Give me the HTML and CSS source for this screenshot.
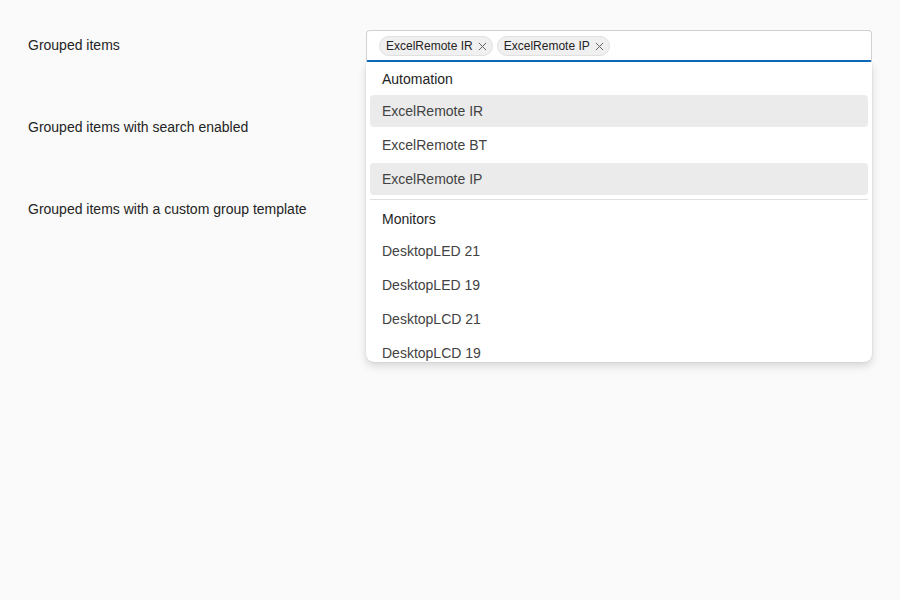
FILE: index.html
```html
<!DOCTYPE html>
<html>
<head>
<meta charset="utf-8">
<link rel="stylesheet" href="styles.css">
</head>
<body>
<div class="page">
  <div class="field">
    <label class="label">Grouped items</label>
    <div class="combo-wrap open">
      <div class="combo focused">
        <span class="chip">ExcelRemote IR<svg class="x" viewBox="0 0 10 10"><path d="M1 1L9 9M9 1L1 9"/></svg></span>
        <span class="chip">ExcelRemote IP<svg class="x" viewBox="0 0 10 10"><path d="M1 1L9 9M9 1L1 9"/></svg></span>
      </div>
      <div class="listbox">
        <div class="group-label">Automation</div>
        <div class="option selected">ExcelRemote IR</div>
        <div class="option">ExcelRemote BT</div>
        <div class="option selected">ExcelRemote IP</div>
        <div class="divider"></div>
        <div class="group-label">Monitors</div>
        <div class="option">DesktopLED 21</div>
        <div class="option">DesktopLED 19</div>
        <div class="option">DesktopLCD 21</div>
        <div class="option">DesktopLCD 19</div>
      </div>
    </div>
  </div>
  <div class="field">
    <label class="label">Grouped items with search enabled</label>
    <div class="combo-wrap"><div class="combo"></div></div>
  </div>
  <div class="field">
    <label class="label">Grouped items with a custom group template</label>
    <div class="combo-wrap"><div class="combo"></div></div>
  </div>
</div>
</body>
</html>
```
FILE: styles.css
```css
html, body {
  margin: 0;
  padding: 0;
  height: 100%;
  background: #fafafa;
  font-family: "Liberation Sans", Arial, sans-serif;
  color: #242424;
}
.page {
  box-sizing: border-box;
  min-height: 100%;
  padding: 30px 28px 0 28px;
  display: flex;
  flex-direction: column;
  gap: 50px;
}
.field {
  display: grid;
  grid-template-columns: 338px 506px;
  align-items: center;
  height: 32px;
}
.label {
  font-size: 14px;
  line-height: 20px;
  color: #242424;
  margin-top: -2px;
}
.combo-wrap {
  position: relative;
  height: 32px;
}
.combo-wrap.open {
  z-index: 10;
}
.combo {
  box-sizing: border-box;
  height: 32px;
  background: transparent;
  border: 1px solid transparent;
  border-radius: 4px;
  display: flex;
  align-items: center;
  gap: 4px;
  padding: 0 12px;
}
.combo.focused {
  background: #ffffff;
  border: 1px solid #d1d1d1;
  border-bottom: 2px solid #0f6cbd;
  border-radius: 4px 4px 2px 2px;
  padding-top: 1px;
}
.chip {
  display: inline-flex;
  align-items: center;
  box-sizing: border-box;
  height: 20px;
  padding: 0 5px 0 6px;
  gap: 5px;
  border: 1px solid #e0e0e0;
  background: #f0f0f0;
  border-radius: 10px;
  font-size: 12px;
  color: #242424;
}
.x {
  width: 9px;
  height: 9px;
  stroke: #616161;
  stroke-width: 1.1;
  fill: none;
}
.listbox {
  position: absolute;
  top: 32px;
  left: 0;
  right: 0;
  height: 300px;
  overflow: hidden;
  background: #ffffff;
  border-radius: 0 0 8px 8px;
  box-shadow: 0 0 2px rgba(0,0,0,0.12), 0 4px 8px rgba(0,0,0,0.14);
  padding: 1px 4px 0 4px;
  box-sizing: border-box;
}
.group-label {
  height: 32px;
  line-height: 32px;
  padding-left: 12px;
  font-size: 14px;
  color: #242424;
}
.option {
  height: 32px;
  line-height: 32px;
  padding-left: 12px;
  font-size: 14px;
  color: #424242;
  border-radius: 4px;
  margin-bottom: 2px;
}
.option.selected {
  background: #ebebeb;
}
.divider {
  height: 1px;
  background: #e0e0e0;
  margin: 4px 0 3px 0;
}
```
